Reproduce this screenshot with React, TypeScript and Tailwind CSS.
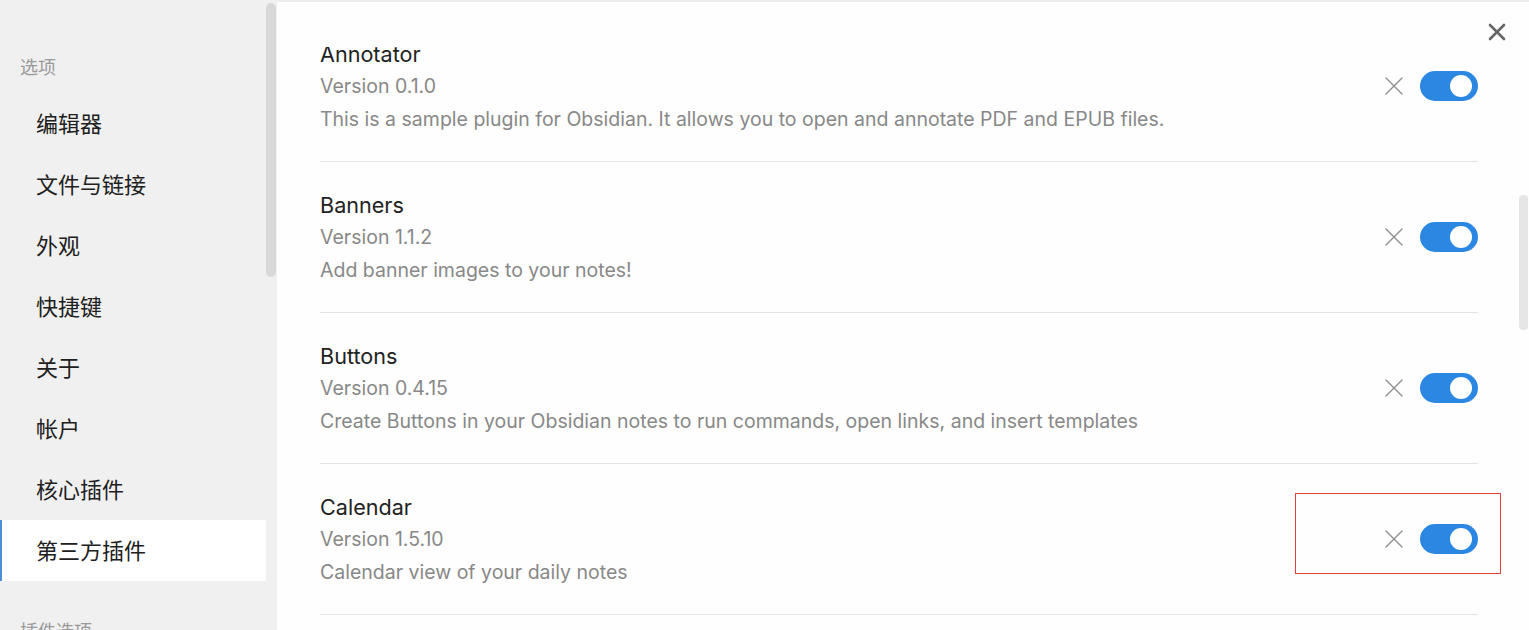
import React from 'react'

const plugins = [
  {
    name: 'Annotator',
    version: '0.1.0',
    desc: 'This is a sample plugin for Obsidian. It allows you to open and annotate PDF and EPUB files.',
  },
  { name: 'Banners', version: '1.1.2', desc: 'Add banner images to your notes!' },
  {
    name: 'Buttons',
    version: '0.4.15',
    desc: 'Create Buttons in your Obsidian notes to run commands, open links, and insert templates',
  },
  { name: 'Calendar', version: '1.5.10', desc: 'Calendar view of your daily notes' },
  { name: 'Dataview', version: '0.5.56', desc: 'Complex data views for the data-obsessed.' },
]

const navItems = ['编辑器', '文件与链接', '外观', '快捷键', '关于', '帐户', '核心插件', '第三方插件']

function Toggle() {
  return (
    <div className="flex h-[30px] w-[58px] items-center justify-end rounded-full bg-[#2b87e2] pr-[6px]">
      <div className="h-[22px] w-[22px] rounded-full bg-white" />
    </div>
  )
}

function SmallX() {
  return (
    <svg width="18" height="18" viewBox="0 0 18 18" fill="none" stroke="#8f8f8f" strokeWidth="1.4" strokeLinecap="round">
      <path d="M1 1L17 17M17 1L1 17" />
    </svg>
  )
}

export default function App() {
  return (
    <div
      className="flex h-[630px] w-[1529px] overflow-hidden bg-white"
      style={{ fontFamily: 'Inter, "Noto Sans CJK SC", "Noto Sans", sans-serif' }}
    >
      {/* sidebar */}
      <div className="flex w-[277px] shrink-0 bg-[#f0f0f0]">
        <div className="w-[266px] shrink-0">
          <div className="mt-[56px] pl-[20px] text-[18px] leading-[24px] text-[#9a9a9a]">选项</div>
          <div className="mt-[13px] flex flex-col">
            {navItems.map((item) => {
              const active = item === '第三方插件'
              return (
                <div
                  key={item}
                  className={
                    active
                      ? 'flex h-[61px] items-center border-l-2 border-[#4a8fd8] bg-white pl-[34px] pt-[2px] text-[22px] text-[#202020]'
                      : 'flex h-[61px] items-center pl-[36px] pt-[2px] text-[22px] text-[#202020]'
                  }
                >
                  {item}
                </div>
              )
            })}
          </div>
          <div className="mt-[39px] pl-[20px] text-[18px] leading-[24px] text-[#9a9a9a]">插件选项</div>
        </div>
        <div className="flex-1 pr-[1px] pt-[3px]">
          <div className="h-[274px] w-[10px] rounded-[5px] bg-[#d8d8d8]" />
        </div>
      </div>

      {/* main */}
      <div className="relative flex min-w-0 flex-1 flex-col border-t-2 border-[#ececec] bg-[#fefefe]">
        <div className="flex h-[45px] shrink-0 justify-end pr-[23px] pt-[21px]">
          <svg width="18" height="18" viewBox="0 0 18 18" fill="none" stroke="#666" strokeWidth="2.6" strokeLinecap="round">
            <path d="M2 2L16 16M16 2L2 16" />
          </svg>
        </div>
        <div className="flex min-h-0 flex-1">
          <div className="min-w-0 flex-1 overflow-hidden pl-[43px] pr-[41px]">
            <div className="-mt-[36px]">
              {plugins.map((p) => (
                <div key={p.name} className="flex items-center border-b border-[#e3e3e3] pb-[26px] pt-[28px]">
                  <div className="min-w-0 flex-1">
                    <div className="text-[21.6px] leading-[30px] text-[#222]">{p.name}</div>
                    <div className="text-[19.5px] leading-[34px] text-[#888]">Version {p.version}</div>
                    <div className="text-[19.5px] leading-[32px] text-[#888]">{p.desc}</div>
                  </div>
                  <div className="flex items-center gap-[17px] pb-[3px]">
                    <SmallX />
                    <Toggle />
                  </div>
                </div>
              ))}
            </div>
          </div>
          <div className="w-[10px] shrink-0 pt-[148px]">
            <div className="h-[135px] w-[9px] rounded-[4px] bg-[#e6e6e6]" />
          </div>
        </div>

        {/* annotation box */}
        <div className="absolute left-[1018px] top-[491px] h-[81px] w-[206px] border border-[#e0413a]" />
      </div>
    </div>
  )
}
